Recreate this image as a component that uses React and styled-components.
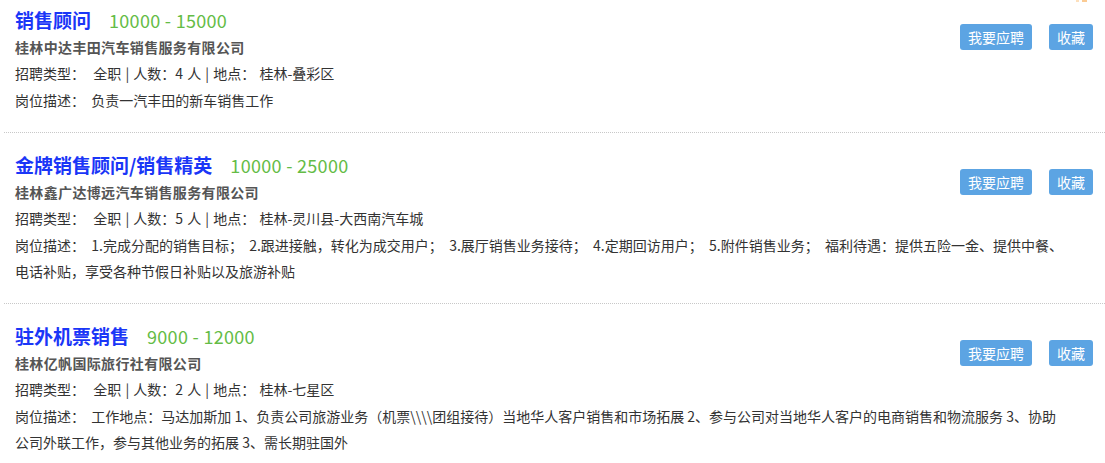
import React from "react";
import styled, { createGlobalStyle } from "styled-components";

const Global = createGlobalStyle`
  html, body { margin: 0; padding: 0; background: #fff; }
  body {
    font-family: "Noto Sans CJK SC", "Microsoft YaHei", "Noto Sans", sans-serif;
    color: #333;
    overflow: hidden;
  }
`;

const Page = styled.div`
  position: relative;
  width: 1105px;
`;

const Corner = styled.svg`
  position: absolute;
  top: 0;
  left: 1076px;
  width: 12px;
  height: 2px;
  display: block;
`;

const List = styled.div`
  display: flex;
  flex-direction: column;
`;

const Item = styled.div`
  display: grid;
  grid-template-columns: 1fr auto;
  margin-left: 4px;
  padding: 18px 12px 19px 11px;
  border-bottom: 1px dotted #c8c8c8;
  &:first-child { padding-top: 6px; }
`;

const Head = styled.div`
  grid-column: 1;
  display: flex;
  align-items: baseline;
  line-height: 28px;
  height: 28px;
`;

const Title = styled.span`
  font-size: 19px;
  font-weight: bold;
  color: #1a36f7;
`;

const Salary = styled.span`
  font-size: 18px;
  color: #64bc46;
  margin-left: 18px;
  letter-spacing: 0.3px;
`;

const Company = styled.div`
  grid-column: 1;
  font-size: 14px;
  font-weight: bold;
  color: #555;
  line-height: 26px;
  letter-spacing: 0.35px;
`;

const Info = styled.div`
  grid-column: 1;
  font-size: 14px;
  color: #333;
  line-height: 27px;
  white-space: pre;
  word-spacing: 1px;
`;

const Desc = styled.div`
  grid-column: 1 / -1;
  font-size: 14px;
  color: #333;
  line-height: 26px;
  padding-right: 27px;
  white-space: pre-wrap;
`;

const Actions = styled.div`
  grid-column: 2;
  grid-row: 1 / span 3;
  align-self: start;
  margin-top: 18px;
  display: flex;
  gap: 17px;
`;

const Button = styled.button`
  border: none;
  border-radius: 3px;
  background: #5ca4e3;
  color: #fff;
  font-family: inherit;
  font-size: 14px;
  line-height: 26px;
  height: 26px;
  padding: 0 8px;
  cursor: pointer;
`;

const jobs = [
  {
    title: "销售顾问",
    salary: "10000 - 15000",
    company: "桂林中达丰田汽车销售服务有限公司",
    count: 4,
    place: "桂林-叠彩区",
    desc: "负责一汽丰田的新车销售工作",
  },
  {
    title: "金牌销售顾问/销售精英",
    salary: "10000 - 25000",
    company: "桂林鑫广达博远汽车销售服务有限公司",
    count: 5,
    place: "桂林-灵川县-大西南汽车城",
    desc:
      "1.完成分配的销售目标；  2.跟进接触，转化为成交用户；  3.展厅销售业务接待；  4.定期回访用户；  5.附件销售业务；  福利待遇：提供五险一金、提供中餐、电话补贴，享受各种节假日补贴以及旅游补贴",
  },
  {
    title: "驻外机票销售",
    salary: "9000 - 12000",
    company: "桂林亿帆国际旅行社有限公司",
    count: 2,
    place: "桂林-七星区",
    desc:
      "工作地点：马达加斯加 1、负责公司旅游业务（机票\\\\\\\\团组接待）当地华人客户销售和市场拓展 2、参与公司对当地华人客户的电商销售和物流服务 3、协助公司外联工作，参与其他业务的拓展 3、需长期驻国外",
  },
];

export default function App() {
  return (
    <Page>
      <Global />
      <Corner viewBox="0 0 12 2" preserveAspectRatio="none">
        <rect x="0" y="0" width="3" height="2" fill="#fde0bd" />
        <rect x="6" y="0" width="5" height="2" fill="#fbcb94" />
      </Corner>
      <List>
        {jobs.map((j) => (
          <Item key={j.title}>
            <Head>
              <Title>{j.title}</Title>
              <Salary>{j.salary}</Salary>
            </Head>
            <Company>{j.company}</Company>
            <Info>{`招聘类型：  全职 | 人数：${j.count} 人 | 地点： ${j.place}`}</Info>
            <Actions>
              <Button>我要应聘</Button>
              <Button>收藏</Button>
            </Actions>
            <Desc>{`岗位描述：  ${j.desc}`}</Desc>
          </Item>
        ))}
      </List>
    </Page>
  );
}
